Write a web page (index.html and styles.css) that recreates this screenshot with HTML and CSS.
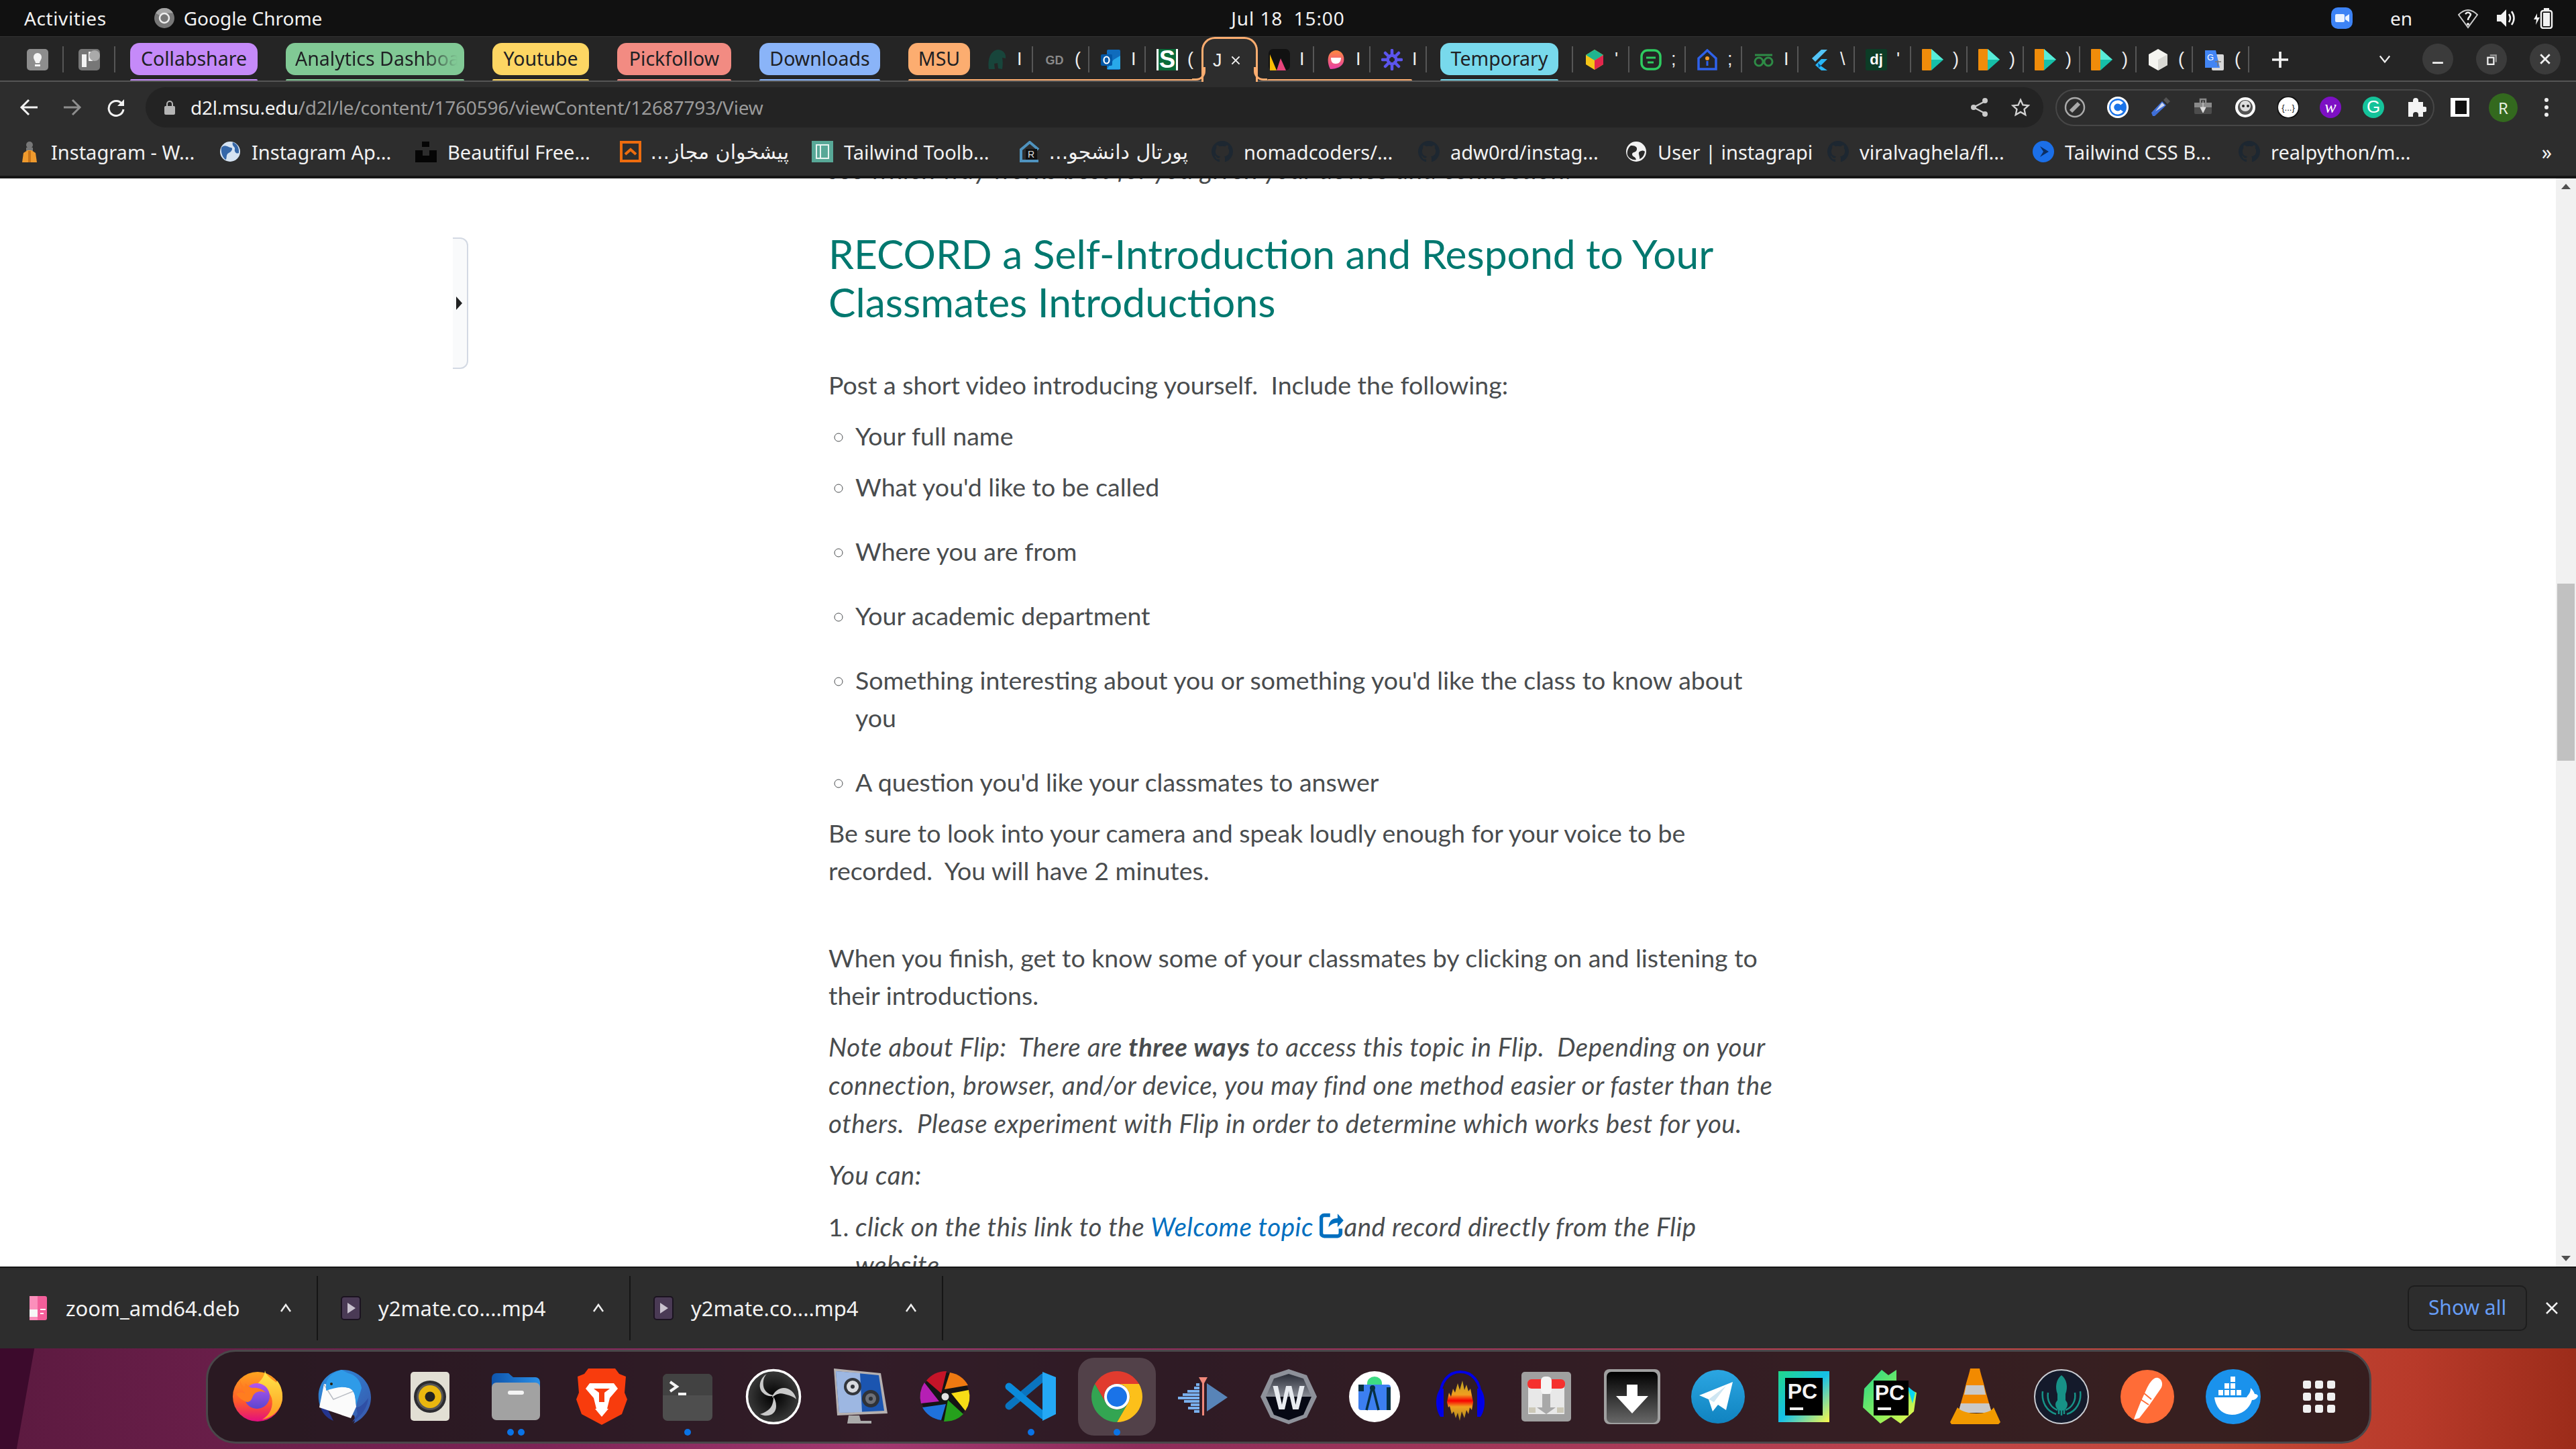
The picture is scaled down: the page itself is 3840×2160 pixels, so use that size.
FILE: index.html
```html
<!DOCTYPE html>
<html lang="en">
<head>
    <meta charset="UTF-8">
    <title>Google Chrome</title>
    <link rel="stylesheet" href="styles.css">
</head>
<body>

    <!-- gnome top bar -->
    <div class="topbar">
        <div class="topbar-left">
            <span class="activities">Activities</span>
            <svg class="app-icon" viewBox="0 0 32 32"><circle cx="16" cy="16" r="15" fill="#777"/><path d="M16 1a15 15 0 0 1 13 7.500H16a7.500 7.500 0 0 0-6.500 3.800L3 8.500A15 15 0 0 1 16 1z" fill="#a5a5a5"/><circle cx="16" cy="16" r="7" fill="none" stroke="#eee" stroke-width="2.500"/></svg>
            <span class="app-name">Google Chrome</span>
        </div>
        <div class="clock">Jul 18&nbsp; 15:00</div>
        <div class="topbar-right">
            <svg class="tray-zoom" viewBox="0 0 32 32"><rect width="32" height="32" rx="10" fill="#3d83f5"/><rect x="6" y="10" width="14" height="12" rx="2" fill="#eaf2ff"/><path d="M21 14l6-4v12l-6-4z" fill="#eaf2ff"/></svg>
            <span class="tray-lang">en</span>
            <svg class="tray-icon" viewBox="0 0 30 32"><path d="M15 30L1 11Q15-3 29 11z" fill="none" stroke="#ccc" stroke-width="2"/><path d="M11 10q4-5 8 0c0 4-4 4-4 9" fill="none" stroke="#eee" stroke-width="2.500"/><circle cx="15" cy="25" r="2" fill="#eee"/></svg>
            <svg class="tray-icon" viewBox="0 0 30 32"><path d="M2 11h6l8-8v26l-8-8H2z" fill="#f2f2f2"/><path d="M20 10q4 6 0 12M24 6q7 10 0 20" fill="none" stroke="#f2f2f2" stroke-width="2.500"/></svg>
            <svg class="tray-icon" viewBox="0 0 30 32"><path d="M6 9L1 18h4l-1 8 6-11H6z" fill="#f2f2f2"/><rect x="12" y="5" width="16" height="26" rx="3" fill="none" stroke="#f2f2f2" stroke-width="2.500"/><rect x="16" y="1" width="8" height="4" fill="#f2f2f2"/><rect x="15" y="8" width="10" height="20" fill="#f2f2f2"/></svg>
        </div>
    </div>

    <!-- tabs -->
    <div class="tabstrip">
        <div class="tab tab--pinned">
            <svg class="fav" viewBox="0 0 32 32"><rect width="32" height="32" rx="5" fill="#8d8d8d"/><path d="M10 12a6 6 0 0 1 12 0c0 4-3 6-3 9h-6c0-3-3-5-3-9z" fill="#f4f4f4"/><rect x="12" y="23" width="8" height="3" fill="#f4f4f4"/></svg>
        </div>
        <div class="tab tab--pinned">
            <svg class="fav" viewBox="0 0 32 32"><rect width="32" height="32" rx="5" fill="#777"/><rect x="5" y="8" width="7" height="19" fill="#f4f4f4"/><rect x="15" y="4" width="6" height="14" fill="#f4f4f4"/><circle cx="24" cy="10" r="8" fill="#aaa"/></svg>
        </div>

        <div class="group group--purple">
            <div class="row"><span class="chip chip--collab">Collabshare</span></div>
            <div class="group-line"></div>
        </div>
        <div class="group group--green">
            <div class="row"><span class="chip chip--analytics"><span class="chip-fade">Analytics Dashboard</span></span></div>
            <div class="group-line"></div>
        </div>
        <div class="group group--yellow">
            <div class="row"><span class="chip chip--youtube">Youtube</span></div>
            <div class="group-line"></div>
        </div>
        <div class="group group--red">
            <div class="row"><span class="chip chip--pick">Pickfollow</span></div>
            <div class="group-line"></div>
        </div>
        <div class="group group--blue">
            <div class="row"><span class="chip chip--downloads">Downloads</span></div>
            <div class="group-line"></div>
        </div>

        <div class="group group--orange group--msu">
            <div class="row">
                <span class="chip chip--msu">MSU</span>
                <div class="tab tab--first">
                    <svg class="fav" viewBox="0 0 32 32"><path d="M4 30C2 16 6 3 17 1c9 0 13 7 12 13l-5-1c1 5 1 11 0 17l-6-1-1-8-5 1 1 8z" fill="#18453b"/></svg>
                    <span class="tab-bit">I</span>
                </div>
                <div class="tab">
                    <svg class="fav" viewBox="0 0 32 32"><text x="16" y="23" class="fav-gd">GD</text></svg>
                    <span class="tab-bit">(</span>
                </div>
                <div class="tab">
                    <svg class="fav" viewBox="0 0 32 32"><rect x="10" y="1" width="20" height="30" rx="2" fill="#0f6cbd"/><path d="M20 16l10-6v20H10z" fill="#28a8ea"/><rect x="1" y="8" width="17" height="17" rx="2" fill="#0358a7"/><ellipse cx="9.500" cy="16.500" rx="4" ry="5" fill="none" stroke="#fff" stroke-width="2.200"/></svg>
                    <span class="tab-bit">I</span>
                </div>
                <div class="tab tab--last">
                    <svg class="fav" viewBox="0 0 32 32"><rect width="32" height="32" fill="#fff"/><rect x="3" width="26" height="32" fill="#0b6b3a"/><text x="16" y="28" class="fav-s">S</text></svg>
                    <span class="tab-bit">(</span>
                </div>
            </div>
            <div class="group-line group-line--msu"></div>
        </div>

        <div class="tab-active">
            <span class="tab-bit tab-bit--active">J</span>
            <svg class="tab-close" viewBox="0 0 20 20"><path d="M3 3l14 14M17 3L3 17" stroke="#f2f2f2" stroke-width="2.500"/></svg>
        </div>

        <div class="group group--orange group--after">
            <div class="row">
                <div class="tab">
                    <svg class="fav" viewBox="0 0 32 32"><rect width="32" height="32" rx="7" fill="#111"/><path d="M2 8l10 24H2z" fill="#fbbc05"/><path d="M18 14l8 18H12z" fill="#e8457c"/></svg>
                    <span class="tab-bit">I</span>
                </div>
                <div class="tab">
                    <svg class="fav" viewBox="0 0 32 32"><defs><linearGradient id="blob" x1="0" y1="0" x2="0" y2="1"><stop offset="0" stop-color="#ff8a3c"/><stop offset="1" stop-color="#e83fa8"/></linearGradient></defs><path d="M16 2c9 0 14 8 12 17-2 7-10 11-20 11-5-9-6-26 8-28z" fill="url(#blob)"/><path d="M9 13h15c0 6-3 9-8 9s-7-3-7-9z" fill="#fff"/></svg>
                    <span class="tab-bit">I</span>
                </div>
                <div class="tab">
                    <svg class="fav" viewBox="0 0 32 32"><g stroke="#5c55ee" stroke-width="4.500" stroke-linecap="round"><path d="M16 2v8M16 22v8M2 16h8M22 16h8M6 6l6 6M20 20l6 6M26 6l-6 6M12 20l-6 6"/></g><circle cx="16" cy="16" r="7" fill="none" stroke="#5c55ee" stroke-width="3"/></svg>
                    <span class="tab-bit">I</span>
                </div>
            </div>
            <div class="group-line group-line--after"></div>
        </div>

        <div class="group group--cyan group--temp">
            <div class="row"><span class="chip chip--temp">Temporary</span></div>
            <div class="group-line"></div>
        </div>

        <div class="sep"></div>
        <div class="tab">
            <svg class="fav" viewBox="0 0 32 32"><path d="M16 1l13 8v14l-13 8-13-8V9z" fill="#f5c518"/><path d="M16 1l13 8-13 8-13-8z" fill="#1fb58f"/><path d="M16 17l13-8v14l-13 8z" fill="#e2264d"/></svg>
            <span class="tab-bit">'</span>
        </div>
        <div class="tab">
            <svg class="fav" viewBox="0 0 32 32"><rect x="2" y="2" width="28" height="28" rx="9" fill="none" stroke="#2ecc60" stroke-width="3.500"/><path d="M9 13h14M11 20h9" stroke="#2ecc60" stroke-width="3"/></svg>
            <span class="tab-bit">;</span>
        </div>
        <div class="tab">
            <svg class="fav" viewBox="0 0 32 32"><path d="M3 14L16 2l13 12v16H3z" fill="none" stroke="#2f62ea" stroke-width="3.500"/><circle cx="16" cy="14" r="3" fill="#f39c2d"/><path d="M16 18v7" stroke="#2f62ea" stroke-width="3"/></svg>
            <span class="tab-bit">;</span>
        </div>
        <div class="tab">
            <svg class="fav" viewBox="0 0 32 32"><g fill="none" stroke="#2e8b46" stroke-width="3"><circle cx="9" cy="19" r="6"/><circle cx="23" cy="19" r="6"/><path d="M3 9h26M15 19h2"/></g></svg>
            <span class="tab-bit">I</span>
        </div>
        <div class="tab">
            <svg class="fav" viewBox="0 0 32 32"><path d="M18 1h9L9 19l-5-5z" fill="#54c5f8"/><path d="M18 15h9L17 25l10 7h-9l-9-8z" fill="#29b6f6"/><path d="M13 21l5 4 -4 3z" fill="#01579b"/></svg>
            <span class="tab-bit">\</span>
        </div>
        <div class="tab">
            <svg class="fav" viewBox="0 0 32 32"><rect width="32" height="32" rx="2" fill="#0c3c26"/><text x="16" y="23" class="fav-dj">dj</text></svg>
            <span class="tab-bit">'</span>
        </div>
        <div class="tab">
            <svg class="fav"><use href="#play"/></svg>
            <span class="tab-bit">)</span>
        </div>
        <div class="tab">
            <svg class="fav"><use href="#play"/></svg>
            <span class="tab-bit">)</span>
        </div>
        <div class="tab">
            <svg class="fav"><use href="#play"/></svg>
            <span class="tab-bit">)</span>
        </div>
        <div class="tab">
            <svg class="fav"><use href="#play"/></svg>
            <span class="tab-bit">)</span>
        </div>
        <div class="tab">
            <svg class="fav" viewBox="0 0 32 32"><path d="M16 0l14 8v16l-14 8-14-8V8z" fill="#f4f4f0"/><path d="M16 16l14-8v16l-14 8z" fill="#d9d9d4"/></svg>
            <span class="tab-bit">(</span>
        </div>
        <div class="tab">
            <svg class="fav" viewBox="0 0 32 32"><rect x="12" y="8" width="18" height="24" rx="2" fill="#d8d8d8"/><path d="M2 2h16l6 26H2z" fill="#4285f4"/><text x="10" y="17" class="fav-g">G</text><path d="M17 19h9M21 17v9" stroke="#777" stroke-width="1.500"/></svg>
            <span class="tab-bit">(</span>
        </div>

        <svg class="tab-plus" viewBox="0 0 26 26"><path d="M13 0v26M0 13h26" stroke="#f2f2f2" stroke-width="4"/></svg>

        <div class="win-controls">
            <svg class="tab-list" viewBox="0 0 20 14"><path d="M2 2l8 10 8-10" fill="none" stroke="#eee" stroke-width="2.500"/></svg>
            <div class="win-btn"><svg viewBox="0 0 16 16"><path d="M1 13h14" stroke="#f2f2f2" stroke-width="2.500"/></svg></div>
            <div class="win-btn"><svg viewBox="0 0 16 16"><rect x="3" y="6" width="8" height="9" fill="none" stroke="#eee" stroke-width="2"/><path d="M6 3h8v9" fill="none" stroke="#999" stroke-width="2"/></svg></div>
            <div class="win-btn"><svg viewBox="0 0 16 16"><path d="M2 2l12 12M14 2L2 14" stroke="#f2f2f2" stroke-width="2.500"/></svg></div>
        </div>
    </div>

    <!-- address bar -->
    <div class="toolbar">
        <svg class="nav-icon" viewBox="0 0 28 28"><path d="M14 3L3 14l11 11M3 14h24" fill="none" stroke="#f2f2f2" stroke-width="3"/></svg>
        <svg class="nav-icon" viewBox="0 0 28 28"><path d="M14 3l11 11-11 11M25 14H1" fill="none" stroke="#8e8e8e" stroke-width="3"/></svg>
        <svg class="nav-icon" viewBox="0 0 28 28"><path d="M23 9a11 11 0 1 0 2 8" fill="none" stroke="#f2f2f2" stroke-width="3"/><path d="M26 2v10H16z" fill="#f2f2f2"/></svg>
        <div class="omnibox">
            <svg class="lock" viewBox="0 0 16 22"><path d="M4 10V6a4 4 0 0 1 8 0v4" fill="none" stroke="#b5b5b5" stroke-width="2"/><rect y="9" width="16" height="13" rx="2" fill="#b5b5b5"/></svg>
            <span class="url"><b>d2l.msu.edu</b>/d2l/le/content/1760596/viewContent/12687793/View</span>
            <svg class="omni-icon" viewBox="0 0 28 30"><g fill="none" stroke="#c9c9c9" stroke-width="2.500"><path d="M22 6L5 15l17 9"/></g><circle cx="22" cy="5" r="4" fill="#c9c9c9"/><circle cx="5" cy="15" r="4" fill="#c9c9c9"/><circle cx="22" cy="25" r="4" fill="#c9c9c9"/></svg>
            <svg class="omni-icon omni-icon--star" viewBox="0 0 30 30"><path d="M15 3l3.700 8.200 8.800.9-6.600 6 1.900 8.800L15 22.400 7.200 27l1.900-8.800-6.600-6 8.800-.9z" fill="none" stroke="#d2d2d2" stroke-width="2.500"/></svg>
        </div>
        <div class="extensions">
            <svg class="ext" viewBox="0 0 32 32"><circle cx="16" cy="16" r="14" fill="none" stroke="#aaa" stroke-width="2.500"/><path d="M10 22L22 10" stroke="#aaa" stroke-width="6"/></svg>
            <svg class="ext" viewBox="0 0 32 32"><circle cx="16" cy="16" r="16" fill="#fff"/><circle cx="16" cy="16" r="13" fill="#1a73e8"/><path d="M22 11a8 8 0 1 0 0 10" fill="none" stroke="#fff" stroke-width="5"/></svg>
            <svg class="ext" viewBox="0 0 32 32"><path d="M5 29L3 24 19 7l6 6L8 29z" fill="#3f6fd8"/><path d="M9 22L19 9l4 4" fill="#cfd8ef"/><path d="M21 5l4-4 6 6-4 4z" fill="#555"/></svg>
            <svg class="ext" viewBox="0 0 32 32"><rect x="3" y="9" width="26" height="17" rx="2" fill="#4d4d4d"/><rect x="3" y="9" width="26" height="7" fill="#8a8a8a"/><path d="M12 9V4h8v5" fill="none" stroke="#8a8a8a" stroke-width="2.500"/><path d="M16 6v14M12 16h8l-4 8z" fill="#ddd" stroke="#ddd" stroke-width="1"/></svg>
            <svg class="ext" viewBox="0 0 32 32"><circle cx="16" cy="16" r="15" fill="#fff"/><circle cx="16" cy="16" r="11" fill="#555"/><circle cx="16" cy="14" r="8" fill="#ddd"/><circle cx="13" cy="14" r="2" fill="#222"/><circle cx="20" cy="14" r="2" fill="#222"/></svg>
            <svg class="ext" viewBox="0 0 32 32"><circle cx="16" cy="16" r="16" fill="#fff"/><circle cx="16" cy="16" r="16" fill="none" stroke="#111" stroke-width="2"/><text x="16" y="21" class="ext-dots">{...}</text></svg>
            <svg class="ext" viewBox="0 0 32 32"><circle cx="16" cy="16" r="16" fill="#7d10c4"/><text x="16" y="24" class="ext-w">w</text></svg>
            <svg class="ext" viewBox="0 0 32 32"><circle cx="16" cy="16" r="16" fill="#15c39a"/><text x="16" y="24" class="ext-g">G</text></svg>
            <svg class="ext" viewBox="0 0 32 32"><path d="M5 8h7V6a4 4 0 0 1 8 0v2h7v7h2a4 4 0 0 1 0 8h-2v7H20v-3a4 4 0 0 0-8 0v3H5z" fill="#f4f4f4"/></svg>
        </div>
        <div class="side-panel"></div>
        <div class="avatar">R</div>
        <svg class="kebab" viewBox="0 0 8 32"><circle cx="4" cy="5" r="3" fill="#eee"/><circle cx="4" cy="16" r="3" fill="#eee"/><circle cx="4" cy="27" r="3" fill="#eee"/></svg>
    </div>

    <!-- bookmarks -->
    <div class="bookmarks">
        <div class="bm">
            <svg class="fav" viewBox="0 0 32 32"><circle cx="16" cy="6" r="5" fill="#777"/><rect x="11" y="10" width="10" height="5" fill="#777"/><path d="M5 32l2-14 6-4h6l6 4 2 14z" fill="#ef9a2d"/><path d="M14 15h4v17h-4z" fill="#c9751a"/></svg>
            <span>Instagram - W...</span>
        </div>
        <div class="bm">
            <svg class="fav" viewBox="0 0 32 32"><circle cx="16" cy="16" r="15" fill="#d5e3f2"/><path d="M3 10c6-6 10 0 14 0s2 6-3 8-2 10-5 10C4 24 2 16 3 10zM20 2c6 2 10 8 9 16-4 2-7-2-6-6 1-3-5-4-3-10z" fill="#3567a8"/></svg>
            <span>Instagram Ap...</span>
        </div>
        <div class="bm">
            <svg class="fav" viewBox="0 0 32 32"><rect x="10" y="1" width="11" height="8" fill="#050505"/><path d="M0 14h11v8h10v-8h11v18H0z" fill="#050505"/></svg>
            <span>Beautiful Free...</span>
        </div>
        <div class="bm">
            <svg class="fav" viewBox="0 0 32 32"><rect x="2" y="2" width="28" height="28" fill="none" stroke="#ee6c0e" stroke-width="4"/><path d="M8 20l8-7 8 7" fill="none" stroke="#ee6c0e" stroke-width="4"/></svg>
            <span class="bm-rtl" dir="rtl">پیشخوان مجاز...</span>
        </div>
        <div class="bm">
            <svg class="fav" viewBox="0 0 32 32"><rect width="32" height="32" fill="#58a897"/><rect x="7" y="6" width="18" height="20" fill="none" stroke="#e8f3f0" stroke-width="2"/><path d="M13 6v20" stroke="#e8f3f0" stroke-width="2"/></svg>
            <span>Tailwind Toolb...</span>
        </div>
        <div class="bm">
            <svg class="fav" viewBox="0 0 32 32"><path d="M3 32V13L16 2l13 11" fill="none" stroke="#4f93bf" stroke-width="4"/><path d="M3 30h26" stroke="#4f93bf" stroke-width="4"/><rect x="10" y="12" width="17" height="16" fill="#111"/><text x="18" y="25" class="fav-r">R</text></svg>
            <span class="bm-rtl" dir="rtl">پورتال دانشجو...</span>
        </div>
        <div class="bm">
            <svg class="fav"><use href="#gh"/></svg>
            <span>nomadcoders/...</span>
        </div>
        <div class="bm">
            <svg class="fav"><use href="#gh"/></svg>
            <span>adw0rd/instag...</span>
        </div>
        <div class="bm">
            <svg class="fav" viewBox="0 0 32 32"><circle cx="16" cy="16" r="15" fill="#f2f2f2"/><path d="M8 7c5 0 10 1 9 6s-7 3-7 7 5 3 6 8c-5 1-11-2-13-7-1-5 1-11 5-14zM21 16c3-2 6-2 8 0-1 5-3 9-8 11 1-4-3-9 0-11z" fill="#2a2a2a"/></svg>
            <span>User | instagrapi</span>
        </div>
        <div class="bm">
            <svg class="fav"><use href="#gh"/></svg>
            <span>viralvaghela/fl...</span>
        </div>
        <div class="bm">
            <svg class="fav" viewBox="0 0 32 32"><circle cx="16" cy="16" r="16" fill="#1b6fe8"/><path d="M11 8l13 8-13 8 5-8z" fill="#0b2e63"/></svg>
            <span>Tailwind CSS B...</span>
        </div>
        <div class="bm">
            <svg class="fav"><use href="#gh"/></svg>
            <span>realpython/m...</span>
        </div>
        <span class="bm-more">»</span>
    </div>

    <!-- page -->
    <div class="content">
        <div class="handle"><div class="handle-arrow"></div></div>
        <div class="article">
            <p class="clipped"><em>see which way works best for you given your device and connection.</em></p>
            <h2>RECORD a Self-Introduction and Respond to Your Classmates Introductions</h2>
            <p>Post a short video introducing yourself.&nbsp; Include the following:</p>
            <ul>
                <li>Your full name</li>
                <li>What you'd like to be called</li>
                <li class="spaced">Where you are from</li>
                <li class="spaced">Your academic department</li>
                <li class="spaced">Something interesting about you or something you'd like the class to know about you</li>
                <li class="spaced">A question you'd like your classmates to answer</li>
            </ul>
            <p>Be sure to look into your camera and speak loudly enough for your voice to be recorded.&nbsp; You will have 2 minutes.</p>
            <p class="blank">&nbsp;</p>
            <p>When you finish, get to know some of your classmates by clicking on and listening to their introductions.</p>
            <p><em>Note about Flip:&nbsp; There are <strong>three ways</strong> to access this topic in Flip.&nbsp; Depending on your connection, browser, and/or device, you may find one method easier or faster than the others.&nbsp; Please experiment with Flip in order to determine which works best for you.</em></p>
            <p><em>You can:</em></p>
            <ol>
                <li><em>click on the this link to the <a href="#">Welcome topic</a> <svg class="ext-link" viewBox="0 0 32 36"><path d="M14 5H6a4 4 0 0 0-4 4v20a4 4 0 0 0 4 4h18a4 4 0 0 0 4-4v-6" fill="none" stroke="#006fbf" stroke-width="5"/><path d="M12 21c0-8 5-12 12-12V3l8 9-8 9v-6c-5 0-9 2-12 6z" fill="#006fbf"/></svg>and record directly from the Flip website</em></li>
            </ol>
        </div>
        <div class="scrollbar">
            <div class="scroll-up"></div>
            <div class="scroll-thumb"></div>
            <div class="scroll-down"></div>
        </div>
    </div>

    <!-- downloads -->
    <div class="shelf">
        <div class="dl">
            <svg class="dl-icon" viewBox="0 0 30 36"><rect x="2" width="26" height="36" rx="3" fill="#f25e9a"/><rect x="2" width="12" height="36" fill="#fb8fbb"/><rect x="2" y="20" width="12" height="11" fill="#f6f6f6"/><path d="M18 20h8M18 26h5" stroke="#fff" stroke-width="2"/></svg>
            <span class="dl-name">zoom_amd64.deb</span>
            <svg class="dl-caret" viewBox="0 0 18 14"><path d="M2 12L9 2l7 10" fill="none" stroke="#eee" stroke-width="2.500"/></svg>
        </div>
        <div class="dl">
            <svg class="dl-icon" viewBox="0 0 30 36"><use href="#video"/></svg>
            <span class="dl-name">y2mate.co....mp4</span>
            <svg class="dl-caret" viewBox="0 0 18 14"><path d="M2 12L9 2l7 10" fill="none" stroke="#eee" stroke-width="2.500"/></svg>
        </div>
        <div class="dl">
            <svg class="dl-icon" viewBox="0 0 30 36"><use href="#video"/></svg>
            <span class="dl-name">y2mate.co....mp4</span>
            <svg class="dl-caret" viewBox="0 0 18 14"><path d="M2 12L9 2l7 10" fill="none" stroke="#eee" stroke-width="2.500"/></svg>
        </div>
        <div class="show-all">Show all</div>
        <svg class="shelf-close" viewBox="0 0 20 20"><path d="M2 2l16 16M18 2L2 18" stroke="#f2f2f2" stroke-width="2.500"/></svg>
    </div>

    <!-- desktop + dock -->
    <div class="desktop">
        <div class="dock">
            <!-- firefox -->
            <div class="dock-item">
                <svg viewBox="0 0 84 84"><defs><linearGradient id="ffA" x1="0" y1="0" x2="0" y2="1"><stop offset="0" stop-color="#ffa51f"/><stop offset=".6" stop-color="#ff5a2a"/><stop offset="1" stop-color="#e30d7f"/></linearGradient><linearGradient id="ffB" x1="0" y1="0" x2="0" y2="1"><stop offset="0" stop-color="#b455f0"/><stop offset="1" stop-color="#5b46cf"/></linearGradient><linearGradient id="ffC" x1="0" y1="0" x2="0" y2="1"><stop offset="0" stop-color="#ffe74a"/><stop offset="1" stop-color="#ff9a1f"/></linearGradient></defs><circle cx="41" cy="42" r="37" fill="url(#ffA)"/><path d="M52 3c1 7 9 12 17 18l1-3c5 6 9 16 8 28-2 14-13 27-30 30 12-7 17-20 14-32-3-10-12-17-24-17 5-8 13-12 14-24z" fill="url(#ffC)"/><circle cx="40" cy="41" r="19" fill="url(#ffB)"/><path d="M15 17c1 5 3 9 7 11l1-6c3 3 6 6 10 7 7-1 15 1 20 7-9-4-16-1-19 5-2 5-3 8-8 9-6-1-13-6-17-12 5-3 8-3 13-1-5-6-8-12-7-20z" fill="#ff7d1f"/></svg>
            </div>
            <!-- thunderbird -->
            <div class="dock-item">
                <svg viewBox="0 0 84 84"><defs><linearGradient id="tbA" x1="0" y1="0" x2="1" y2="1"><stop offset="0" stop-color="#2b8fe0"/><stop offset="1" stop-color="#3a55a8"/></linearGradient></defs><path d="M38 2c24-1 44 18 44 41 0 18-11 32-26 39 3-4 2-8 1-12L6 56C-2 30 12 6 38 2z" fill="url(#tbA)"/><path d="M6 54c2 12 10 20 20 24L14 54z" fill="#24358f"/><path d="M5 58l7-35 45 7 3 27-8 17z" fill="#fbfbfb"/><path d="M12 24l14 22 32-13" fill="none" stroke="#b9bdc4" stroke-width="1.500"/><path d="M15 24c1-10 9-18 23-22l10 5c10 2 18 10 20 22-2 8-5 14-8 26-1-14-3-23-11-26-10-3-22 0-34 4z" fill="#2f9be8"/><circle cx="23" cy="23" r="2" fill="#2b2008"/><path d="M60 58c6 0 12-6 18-14-1 12-8 26-24 36l8-12z" fill="#2f4fa5"/></svg>
            </div>
            <!-- rhythmbox -->
            <div class="dock-item">
                <svg viewBox="0 0 84 84"><rect x="13" y="5" width="58" height="73" rx="5" fill="#e2dfd4"/><circle cx="42" cy="42" r="24" fill="#2c2c30"/><circle cx="42" cy="42" r="20" fill="#565658"/><circle cx="42" cy="42" r="17" fill="#e9b70f"/><circle cx="42" cy="42" r="7.500" fill="#222"/></svg>
            </div>
            <!-- files -->
            <div class="dock-item">
                <svg viewBox="0 0 84 84"><defs><linearGradient id="flA" x1="0" y1="0" x2="1" y2="0"><stop offset="0" stop-color="#0e55ad"/><stop offset="1" stop-color="#2b8fe6"/></linearGradient></defs><path d="M6 14a7 7 0 0 1 7-7h18l7 6h33a7 7 0 0 1 7 7v14H6z" fill="url(#flA)"/><rect x="6" y="21" width="72" height="56" rx="7" fill="#a2a2a2"/><rect x="30" y="33" width="24" height="6" rx="3" fill="#f4f4f4"/></svg>
                <div class="dock-dots"><i></i><i></i></div>
            </div>
            <!-- brave -->
            <div class="dock-item">
                <svg viewBox="0 0 84 84"><path d="M22 0h40l6 8 10 4-2 24 4 10-8 22-30 16-30-16-8-22 4-10-2-24 10-4z" fill="#f83c0d"/><path d="M24 22h36l6 8-12 14-4 16-8 8-8-8-4-16-12-14z" fill="#fff"/><path d="M30 30h24l-8 6v14h-8V36z" fill="#f83c0d"/><path d="M32 60h20l-10 12z" fill="#fff"/></svg>
            </div>
            <!-- terminal -->
            <div class="dock-item">
                <svg viewBox="0 0 84 84"><rect x="5" y="8" width="74" height="70" rx="7" fill="#4e4e4e"/><path d="M5 15a7 7 0 0 1 7-7h60a7 7 0 0 1 7 7v25H5z" fill="#424242"/><path d="M16 20l10 7-10 7" fill="none" stroke="#f4f4f4" stroke-width="4"/><path d="M28 38h12" stroke="#f4f4f4" stroke-width="4"/></svg>
                <div class="dock-dots"><i></i></div>
            </div>
            <!-- obs -->
            <div class="dock-item">
                <svg viewBox="0 0 84 84"><defs><radialGradient id="obsA"><stop offset="0" stop-color="#000"/><stop offset="1" stop-color="#3a3a3a"/></radialGradient></defs><circle cx="42" cy="42" r="39.500" fill="url(#obsA)" stroke="#fff" stroke-width="3.500"/><g fill="#c9c9c9"><path d="M32 8C22 14 18 28 26 36c6 6 14 6 18 4-8 0-16-6-17-14-1-8 1-14 5-18z"/><path d="M76 46C74 34 62 26 52 30c-8 3-12 10-12 14 4-6 12-8 18-6 8 2 14 4 18 8z"/><path d="M22 68c12 6 24 0 24-12 0-6-2-10-4-14 0 8-2 16-8 20-4 3-8 5-12 6z"/></g></svg>
            </div>
            <!-- video converter -->
            <div class="dock-item">
                <svg viewBox="0 0 84 84"><path d="M4 0l70 7 10 60-75 3z" fill="#b5b0b0"/><path d="M7 4l64 6 8 53-67 3z" fill="#1b55b0"/><path d="M7 4l36 3 3 58-34 1z" fill="#9db7e2"/><circle cx="32" cy="27" r="13" fill="#33363c"/><circle cx="32" cy="27" r="9" fill="#d8dadf"/><circle cx="32" cy="27" r="3" fill="#33363c"/><circle cx="59" cy="45" r="13" fill="#2f3238"/><circle cx="59" cy="45" r="8" fill="#6d7078"/><circle cx="59" cy="45" r="3" fill="#2f3238"/><path d="M26 70h16l2 8h16v4H24z" fill="#aaa"/></svg>
            </div>
            <!-- darktable -->
            <div class="dock-item">
                <svg viewBox="0 0 84 84"><circle cx="42" cy="42" r="36" fill="#141414"/><path d="M14 18A38 38 0 0 1 44 4L36 37z" fill="#c41428"/><path d="M49 6A38 38 0 0 1 76 25L41 31z" fill="#ef7a11"/><path d="M77 32A38 38 0 0 1 72 63L51 37z" fill="#f7dd16"/><path d="M69 68A38 38 0 0 1 40 79L46 47z" fill="#25a01c"/><path d="M36 77A38 38 0 0 1 8 58L43 53z" fill="#1f72dc"/><path d="M6 52A38 38 0 0 1 11 21L33 49z" fill="#b61fb4"/><circle cx="42" cy="42" r="5.500" fill="#e2e2e2"/></svg>
            </div>
            <!-- vs code -->
            <div class="dock-item">
                <svg viewBox="0 0 84 84"><path d="M9 56L60 13" fill="none" stroke="#0a74bf" stroke-width="11" stroke-linecap="round"/><path d="M9 27L60 70" fill="none" stroke="#0a8ada" stroke-width="11" stroke-linecap="round"/><path d="M59 5l20 8v55l-20 10z" fill="#24a8f5"/></svg>
                <div class="dock-dots"><i></i></div>
            </div>
            <!-- chrome -->
            <div class="dock-item dock-item--active">
                <svg viewBox="0 0 84 84"><path d="M9.100 23A38 38 0 0 1 74.900 23L42 23A19 19 0 0 0 25.500 51.500Z" fill="#e13b2e"/><path d="M74.900 23A38 38 0 0 1 42 80L58.500 51.500A19 19 0 0 0 42 23Z" fill="#fcc01a"/><path d="M42 80A38 38 0 0 1 9.100 23L25.500 51.500A19 19 0 0 0 58.500 51.500Z" fill="#33a552"/><circle cx="42" cy="42" r="19" fill="#fff"/><circle cx="42" cy="42" r="15" fill="#1a73e8"/></svg>
                <div class="dock-dots"><i></i></div>
            </div>
            <!-- kdenlive -->
            <div class="dock-item">
                <svg viewBox="0 0 84 84"><path d="M48 22l31 21-31 21z" fill="#5884b8"/><path d="M36 13h13l-5 9v48h-3V22z" fill="#f0887a"/><path d="M32 22h5v4h-5zM29 27h8v4h-8zM19 32h18v4H19zM12 37h25v4H12zM5 42h32v4H5zM14 47h23v4H14zM24 52h13v4H24zM20 57h17v4H20zM29 62h8v4h-8z" fill="#79b0ee"/></svg>
            </div>
            <!-- warp -->
            <div class="dock-item">
                <svg viewBox="0 0 84 84"><defs><linearGradient id="wpA" x1="0" y1="0" x2="0" y2="1"><stop offset="0" stop-color="#2a2d38"/><stop offset=".5" stop-color="#8a8d96"/><stop offset=".5" stop-color="#060814"/><stop offset="1" stop-color="#060814"/></linearGradient></defs><path d="M42 1l27 9 15 32-15 31-27 10-27-10L0 42 15 10z" fill="#8e919a"/><path d="M42 8l22 7 12 27-12 27-22 8-22-8L8 42l12-27z" fill="url(#wpA)"/><text x="42" y="61" class="dock-w">W</text></svg>
            </div>
            <!-- android studio -->
            <div class="dock-item">
                <svg viewBox="0 0 84 84"><circle cx="42" cy="42" r="38" fill="#fff"/><path d="M31 22a11 10 0 0 1 22 0v2H31z" fill="#3ddc84"/><rect x="18" y="24" width="48" height="38" rx="4" fill="#3c7ff0"/><rect x="18" y="24" width="8" height="10" fill="#073042"/><path d="M30 62l9-36 9 36" fill="none" stroke="#073042" stroke-width="3.500"/><circle cx="39" cy="29" r="3" fill="none" stroke="#073042" stroke-width="2"/><rect x="60" y="28" width="6" height="34" fill="#073042"/></svg>
            </div>
            <!-- audacity -->
            <div class="dock-item">
                <svg viewBox="0 0 84 84"><defs><linearGradient id="aud" x1="0" y1="0" x2="0" y2="1"><stop offset="0" stop-color="#b9a020"/><stop offset=".35" stop-color="#f0a020"/><stop offset=".5" stop-color="#f80000"/><stop offset=".65" stop-color="#f0a020"/><stop offset="1" stop-color="#a08a20"/></linearGradient></defs><path d="M12 42C12 20 24 5 42 5s30 15 30 37" fill="none" stroke="#0000e6" stroke-width="4"/><path d="M12 30C4 40 4 60 12 72h5V30z" fill="#0000e6"/><path d="M72 30c8 10 8 30 0 42h-5V30z" fill="#0000e6"/><path d="M22 50l3-14 3 6 3-12 3 6 4-14 3 10 4-14 3 14 3-8 3 10 3-4 2 10 2 10-2 12-3-4-2 10-3-6-3 12-4-10-3 14-3-12-3 8-3-10-3 4-3-12-2 2z" fill="url(#aud)"/></svg>
            </div>
            <!-- install toggle -->
            <div class="dock-item">
                <svg viewBox="0 0 84 84"><rect x="5" y="5" width="74" height="74" rx="5" fill="#a0a0a0"/><rect x="15" y="18" width="54" height="50" fill="#e8e8e8"/><rect x="14" y="16" width="56" height="14" rx="6" fill="#f5302e"/><rect x="34" y="12" width="16" height="26" rx="6" fill="#f4f4f4"/><path d="M36 38h12v20h8L42 68 28 58h8z" fill="#a8a8a8"/><rect x="16" y="58" width="10" height="8" fill="#ccc8b8"/><rect x="58" y="58" width="10" height="8" fill="#ccc8b8"/></svg>
            </div>
            <!-- down arrow -->
            <div class="dock-item">
                <svg viewBox="0 0 84 84"><defs><linearGradient id="dlb" x1="0" y1="0" x2="0" y2="1"><stop offset="0" stop-color="#000"/><stop offset="1" stop-color="#676767"/></linearGradient></defs><rect x="0" y="1" width="84" height="82" rx="8" fill="#a0a0a0"/><rect x="4" y="5" width="76" height="76" rx="7" fill="url(#dlb)"/><path d="M34 24h16v17h16L42 67 18 41h16z" fill="#fff"/></svg>
            </div>
            <!-- telegram -->
            <div class="dock-item">
                <svg viewBox="0 0 84 84"><defs><linearGradient id="tg" x1="0" y1="0" x2="0" y2="1"><stop offset="0" stop-color="#2ba6e2"/><stop offset="1" stop-color="#1083c0"/></linearGradient></defs><circle cx="42" cy="42" r="40" fill="url(#tg)"/><path d="M64 20L14 40l14 6 6 18 8-10 12 8z" fill="#fff"/><path d="M28 46l26-20-18 24z" fill="#cfe6f2"/></svg>
            </div>
            <!-- pycharm -->
            <div class="dock-item">
                <svg viewBox="0 0 84 84"><defs><linearGradient id="pc1" x1="0" y1="0" x2="1" y2="1"><stop offset="0" stop-color="#21d789"/><stop offset=".5" stop-color="#14c0e8"/><stop offset="1" stop-color="#fcf84a"/></linearGradient></defs><rect x="4" y="4" width="76" height="76" fill="url(#pc1)"/><rect x="14" y="14" width="56" height="56" fill="#000"/><text x="40" y="45" class="dock-pc">PC</text><rect x="21" y="58" width="20" height="4" fill="#f2f2f2"/></svg>
            </div>
            <div class="dock-item">
                <svg viewBox="0 0 84 84"><defs><linearGradient id="pc2" x1="0" y1="0" x2="1" y2="1"><stop offset="0" stop-color="#21d789"/><stop offset=".6" stop-color="#8ef05a"/><stop offset="1" stop-color="#fcf84a"/></linearGradient></defs><path d="M4 30L30 2l10 8 12-8v20l30 14-4 28-20 18-14-10-16 10L2 58z" fill="url(#pc2)"/><path d="M68 26l12 10-4 16z" fill="#0ad7f2"/><rect x="18" y="18" width="52" height="52" fill="#000"/><text x="42" y="47" class="dock-pc">PC</text><rect x="24" y="58" width="20" height="4" fill="#f2f2f2"/></svg>
            </div>
            <!-- vlc -->
            <div class="dock-item">
                <svg viewBox="0 0 84 84"><path d="M34 0h14c2 10 6 20 9 34l9 32H16l9-32C28 20 32 10 34 0z" fill="#f28a00"/><path d="M28 25h26l3 14H25z" fill="#c9c9c9"/><path d="M20 52h42l4 14H16z" fill="#c9c9c9"/><path d="M15 58L4 80l2 3h70l3-3-10-22c-6 12-44 12-54 0z" fill="#f29a00"/></svg>
            </div>
            <!-- gitkraken -->
            <div class="dock-item">
                <svg viewBox="0 0 84 84"><circle cx="42" cy="42" r="40" fill="#141a2b" stroke="#c9ccd2" stroke-width="2"/><path d="M42 10c8 6 10 18 6 28v10h-12V38c-4-10-2-22 6-28z" fill="#179287"/><g fill="none" stroke="#179287" stroke-width="2.500"><path d="M14 34c-2 16 6 30 20 34M70 34c2 16-6 30-20 34"/><path d="M22 36c-2 12 4 22 14 26M62 36c2 12-4 22-14 26"/><path d="M38 48v20M46 48v20M42 48v22"/></g><circle cx="42" cy="54" r="9" fill="#179287"/></svg>
            </div>
            <!-- postman -->
            <div class="dock-item">
                <svg viewBox="0 0 84 84"><circle cx="42" cy="42" r="40" fill="#ff6c37"/><path d="M58 14c6 2 8 10 4 16L44 56 30 74l-8 2 2-6 8-20 10-22c4-8 10-16 16-14z" fill="#fff"/><path d="M36 36l12 10M32 46l12 8" stroke="#ff6c37" stroke-width="2"/></svg>
            </div>
            <!-- docker -->
            <div class="dock-item">
                <svg viewBox="0 0 84 84"><circle cx="42" cy="42" r="41" fill="#1a92ec"/><path d="M14 43h48c2-4 6-6 6-14 3 3 5 6 6 9 3 0 4 1 5 3-2 4-5 6-9 6-4 14-16 22-30 22-14 0-24-10-26-26z" fill="#fff"/><path d="M20 32h7v8h-7zM29 32h7v8h-7zM38 32h7v8h-7zM47 32h7v8h-7zM29 22h7v8h-7zM38 22h7v8h-7zM38 12h7v8h-7z" fill="#fff"/></svg>
            </div>
            <!-- app grid -->
            <div class="dock-item">
                <svg viewBox="0 0 84 84"><g fill="#f0f0f0"><rect x="18" y="18" width="12" height="12" rx="3"/><rect x="36" y="18" width="12" height="12" rx="3"/><rect x="54" y="18" width="12" height="12" rx="3"/><rect x="18" y="36" width="12" height="12" rx="3"/><rect x="36" y="36" width="12" height="12" rx="3"/><rect x="54" y="36" width="12" height="12" rx="3"/><rect x="18" y="54" width="12" height="12" rx="3"/><rect x="36" y="54" width="12" height="12" rx="3"/><rect x="54" y="54" width="12" height="12" rx="3"/></g></svg>
            </div>
        </div>
    </div>

    <!-- shared icons -->
    <svg class="defs">
        <symbol id="play" viewBox="0 0 32 32"><rect width="14" height="32" rx="1" fill="#f08c0a"/><path d="M14 0l18 16-18 16z" fill="#16bfa8"/><path d="M14 0l18 16H14z" fill="#58ecd8"/></symbol>
        <symbol id="gh" viewBox="0 0 16 16"><path d="M8 0C3.580 0 0 3.580 0 8c0 3.540 2.290 6.530 5.470 7.590.4.070.55-.17.55-.38 0-.19-.01-.82-.01-1.490-2.010.37-2.530-.49-2.690-.94-.09-.23-.48-.94-.82-1.130-.28-.15-.68-.52-.01-.53.63-.01 1.080.58 1.230.82.72 1.210 1.870.87 2.330.66.07-.52.28-.87.51-1.070-1.780-.2-3.640-.89-3.640-3.950 0-.87.31-1.590.82-2.150-.08-.2-.36-1.020.08-2.120 0 0 .67-.21 2.200.82.64-.18 1.320-.27 2-.27.68 0 1.360.09 2 .27 1.530-1.040 2.200-.82 2.200-.82.44 1.100.16 1.920.08 2.120.51.56.82 1.270.82 2.150 0 3.070-1.870 3.750-3.650 3.950.29.25.54.73.54 1.480 0 1.070-.01 1.930-.01 2.200 0 .21.15.46.55.38A8.013 8.013 0 0016 8c0-4.420-3.580-8-8-8z" fill="#1d2731"/></symbol>
        <symbol id="video" viewBox="0 0 30 36"><rect width="30" height="36" rx="5" fill="#1b1320"/><rect x="2" y="2" width="26" height="32" rx="3" fill="#4a3a55"/><path d="M10 10l12 8-12 8z" fill="#c9c2ce"/></symbol>
    </svg>

</body>
</html>
```
FILE: styles.css
```css
* {
    box-sizing: border-box;
}

html, body {
    margin: 0;
    padding: 0;
}

body {
    width: 3840px;
    height: 2160px;
    display: flex;
    flex-direction: column;
    overflow: hidden;
    background: #2d2d2d;
    font-family: "Noto Sans", "DejaVu Sans", sans-serif;
    color: #f2f2f2;
}

svg {
    display: block;
    flex-shrink: 0;
}

.defs {
    width: 0;
    height: 0;
    position: absolute;
}

/* top bar */
.topbar {
    height: 54px;
    flex-shrink: 0;
    background: #111;
    display: grid;
    grid-template-columns: 1fr auto 1fr;
    align-items: center;
    font-size: 28px;
}

.topbar-left {
    display: flex;
    align-items: center;
    padding-left: 36px;
}

.activities {
    letter-spacing: 0.6px;
}

.app-icon {
    width: 32px;
    height: 32px;
    margin-left: 70px;
}

.app-name {
    margin-left: 13px;
}

.clock {
    letter-spacing: 0.9px;
}

.topbar-right {
    display: flex;
    align-items: center;
    justify-content: flex-end;
    padding-right: 34px;
}

.tray-zoom {
    width: 32px;
    height: 32px;
}

.tray-lang {
    margin-left: 56px;
    margin-right: 68px;
}

.tray-icon {
    width: 30px;
    height: 32px;
    margin-right: 26px;
}

.tray-icon:last-child {
    margin-right: 0;
}

/* tab strip */
.tabstrip {
    height: 68px;
    flex-shrink: 0;
    background: #252525;
    border-bottom: 2px solid #555;
    border-top: 1px solid #333;
    display: flex;
    align-items: flex-start;
    padding-left: 18px;
    padding-right: 23px;
}

.tab {
    width: 84px;
    height: 39px;
    margin-top: 14px;
    display: flex;
    align-items: center;
    padding-left: 16px;
    border-right: 2px solid #565656;
    flex-shrink: 0;
}

.tab--pinned {
    width: 77px;
    padding-left: 22px;
}

.tab--first {
    margin-left: 10px;
    padding-left: 14px;
}

.tab--last {
    border-right: none;
    width: 83px;
}

.fav {
    width: 32px;
    height: 32px;
}

.tab-bit {
    margin-left: 14px;
    font-family: "Liberation Sans", sans-serif;
    font-size: 27px;
    line-height: 1;
    color: #eee;
}

.group {
    display: flex;
    flex-direction: column;
    flex-shrink: 0;
    height: 65px;
}

.row {
    display: flex;
    align-items: flex-start;
    height: 63px;
}

.group-line {
    height: 2px;
    border-radius: 2px 2px 0 0;
}

.chip {
    display: block;
    height: 48px;
    margin-top: 9px;
    border-radius: 14px;
    color: #202124;
    font-size: 28.5px;
    line-height: 47px;
    text-align: center;
    overflow: hidden;
    white-space: nowrap;
}

.group--purple { margin-left: 22px; }
.group--purple .chip, .group--purple .group-line { background: #c58af9; }
.group--green .chip, .group--green .group-line { background: #81c995; }
.group--yellow .chip, .group--yellow .group-line { background: #fdd663; }
.group--red .chip, .group--red .group-line { background: #f28b82; }
.group--blue .chip, .group--blue .group-line { background: #8ab4f8; }
.group--orange .chip, .group--orange .group-line { background: #fcad70; }
.group--cyan .chip, .group--cyan .group-line { background: #78d9ec; }

.group--green, .group--yellow, .group--red, .group--blue, .group--msu {
    margin-left: 42px;
}

.chip--collab { width: 190px; }
.chip--analytics { width: 266px; padding-left: 14px; text-align: left; }
.chip--youtube { width: 144px; }
.chip--pick { width: 170px; }
.chip--downloads { width: 180px; }
.chip--msu { width: 92px; }
.chip--temp { width: 176px; }

.chip-fade {
    display: block;
    -webkit-mask-image: linear-gradient(90deg, #000 76%, transparent 96%);
    mask-image: linear-gradient(90deg, #000 76%, transparent 96%);
}

.group--temp {
    margin-left: 20px;
}

.group-line--msu {
    margin-right: 14px;
    border-radius: 2px 0 0 0;
}

.group-line--after {
    margin-left: 14px;
    margin-right: 22px;
}

.tab-active {
    width: 84px;
    height: 67px;
    margin-bottom: -2px;
    flex-shrink: 0;
    background: #2d2d2d;
    border: 3px solid #fcad70;
    border-bottom: none;
    border-radius: 20px 20px 0 0;
    display: flex;
    align-items: center;
    padding-left: 14px;
    position: relative;
    z-index: 1;
}

/* curved feet where the tab meets the group line */
.tab-active::before, .tab-active::after {
    content: "";
    position: absolute;
    bottom: 2px;
    width: 17px;
    height: 17px;
    border-bottom: 3px solid #fcad70;
}

.tab-active::before {
    left: -17px;
    border-right: 3px solid #fcad70;
    border-radius: 0 0 14px 0;
}

.tab-active::after {
    right: -17px;
    border-left: 3px solid #fcad70;
    border-radius: 0 0 0 14px;
}

.tab-bit--active {
    margin-left: 0;
    width: 26px;
}

.tab-close {
    width: 16px;
    height: 16px;
}

.group--after {
    margin-left: 0;
}

.sep {
    width: 2px;
    height: 39px;
    margin-top: 14px;
    margin-left: 20px;
    background: #565656;
    flex-shrink: 0;
}

.tab-plus {
    width: 24px;
    height: 24px;
    margin-left: 34px;
    margin-top: 22px;
}

.win-controls {
    display: flex;
    align-items: center;
    margin-left: auto;
    margin-top: 10px;
}

.tab-list {
    width: 18px;
    height: 14px;
    margin-right: 47px;
}

.win-btn {
    width: 46px;
    height: 46px;
    border-radius: 50%;
    background: #3b3b3b;
    margin-left: 34px;
    display: flex;
    align-items: center;
    justify-content: center;
}

.tab-list + .win-btn {
    margin-left: 0;
}

.win-btn svg {
    width: 18px;
    height: 18px;
}

/* toolbar */
.toolbar {
    height: 68px;
    flex-shrink: 0;
    background: #2d2d2d;
    display: flex;
    align-items: center;
    padding-left: 29px;
    padding-top: 8px;
    padding-right: 40px;
}

.nav-icon {
    width: 28px;
    height: 28px;
    margin-right: 37px;
}

.omnibox {
    flex: 1;
    height: 60px;
    margin-left: -7px;
    border-radius: 30px;
    background: #232323;
    display: flex;
    align-items: center;
    padding-left: 28px;
    padding-right: 20px;
}

.lock {
    width: 16px;
    height: 22px;
}

.url {
    margin-left: 23px;
    font-size: 28px;
    letter-spacing: -0.2px;
    color: #9a9a9a;
    flex: 1;
}

.url b {
    color: #f2f2f2;
    font-weight: 400;
}

.omni-icon {
    width: 28px;
    height: 30px;
    margin-right: 33px;
}

.omni-icon--star {
    margin-right: 0;
}

.extensions {
    width: 565px;
    height: 55px;
    margin-left: 18px;
    flex-shrink: 0;
    border: 2px solid #474747;
    border-radius: 28px;
    display: flex;
    align-items: center;
    justify-content: space-between;
    padding: 0 10px 0 11px;
}

.ext {
    width: 32px;
    height: 32px;
}

.side-panel {
    width: 28px;
    height: 28px;
    margin-left: 24px;
    background: #111;
    border: solid #fff;
    border-width: 4px 4px 4px 7px;
    flex-shrink: 0;
}

.avatar {
    width: 43px;
    height: 43px;
    margin-left: 29px;
    border-radius: 50%;
    background: #33691e;
    color: #e8f0e0;
    font-size: 24px;
    line-height: 43px;
    text-align: center;
    flex-shrink: 0;
}

.kebab {
    width: 8px;
    height: 32px;
    margin-left: 39px;
}

/* bookmarks */
.bookmarks {
    height: 76px;
    flex-shrink: 0;
    background: #2d2d2d;
    border-bottom: 4px solid #151515;
    display: flex;
    align-items: center;
    padding-left: 28px;
    font-size: 29px;
}

.bm {
    display: flex;
    align-items: center;
    gap: 16px;
    white-space: nowrap;
    flex-shrink: 0;
}

/* chrome sizes bookmark buttons by their title, these are the widths on screen */
.bm:nth-child(1) { width: 299px; }
.bm:nth-child(2) { width: 292px; }
.bm:nth-child(3) { width: 305px; }
.bm:nth-child(4) { width: 286px; }
.bm:nth-child(5) { width: 309px; }
.bm:nth-child(6) { width: 287px; }
.bm:nth-child(7) { width: 308px; }
.bm:nth-child(8) { width: 309px; }
.bm:nth-child(9) { width: 301px; }
.bm:nth-child(10) { width: 306px; }
.bm:nth-child(11) { width: 307px; }
.bm:nth-child(12) { width: 250px; }

.bm-rtl {
    font-family: "DejaVu Sans", sans-serif;
    font-size: 30px;
    width: 204px;
    text-align: center;
}

.bm-more {
    margin-left: auto;
    margin-right: 36px;
    font-size: 30px;
}

/* page */
.content {
    flex: 1;
    min-height: 0;
    background: #fff;
    display: flex;
    overflow: hidden;
    font-family: "Lato", sans-serif;
    font-size: 37.5px;
    line-height: 56px;
    color: #494c4e;
}

.handle {
    width: 23px;
    height: 196px;
    margin-left: 675px;
    margin-top: 88px;
    flex-shrink: 0;
    background: #f9fafb;
    border: 2px solid #d3d9e3;
    border-left: none;
    border-radius: 0 12px 12px 0;
    display: flex;
    align-items: center;
}

.handle-arrow {
    width: 0;
    height: 0;
    margin-left: 5px;
    border-left: 9px solid #202122;
    border-top: 10px solid transparent;
    border-bottom: 10px solid transparent;
}

.article {
    width: 1420px;
    margin-left: 537px;
    margin-top: -42px;
    flex-shrink: 0;
}

.article p {
    margin: 0 0 20px;
}

.article em {
    font-size: 38.5px;
    letter-spacing: 0.5px;
}

.article .clipped {
    margin-bottom: 61px;
}

.article .blank {
    margin-bottom: 0;
    line-height: 54px;
}

h2 {
    margin: 0 0 60px;
    font-size: 60.5px;
    line-height: 72px;
    font-weight: 400;
    color: #00786f;
}

ul, ol {
    margin: 0 0 20px;
    padding: 0 0 0 40px;
}

ul {
    list-style: circle;
}

li {
    margin-bottom: 20px;
}

li:last-child {
    margin-bottom: 0;
}

li.spaced {
    margin-top: 40px;
}

a {
    color: #006fbf;
    text-decoration: none;
}

.ext-link {
    display: inline-block;
    width: 36px;
    height: 40px;
    vertical-align: -3px;
}

.scrollbar {
    width: 30px;
    margin-left: auto;
    flex-shrink: 0;
    background: #f1f1f1;
    display: flex;
    flex-direction: column;
    align-items: center;
}

.scroll-up, .scroll-down {
    width: 0;
    height: 0;
    border-left: 7px solid transparent;
    border-right: 7px solid transparent;
}

.scroll-up {
    margin-top: 8px;
    border-bottom: 8px solid #505050;
}

.scroll-thumb {
    width: 26px;
    height: 264px;
    margin-top: 588px;
    background: #c1c1c1;
}

.scroll-down {
    margin-top: auto;
    margin-bottom: 8px;
    border-top: 8px solid #505050;
}

/* downloads */
.shelf {
    height: 122px;
    flex-shrink: 0;
    background: #2d2d2d;
    border-top: 2px solid #151515;
    display: flex;
    align-items: center;
    font-size: 31px;
}

.dl {
    width: 466px;
    height: 96px;
    display: flex;
    align-items: center;
    padding-left: 34px;
    border-right: 2px solid #151515;
    flex-shrink: 0;
}

.dl:first-child {
    width: 474px;
    padding-left: 42px;
}

.dl-icon {
    width: 30px;
    height: 36px;
}

.dl-name {
    margin-left: 26px;
    width: 319px;
}

.dl-caret {
    width: 18px;
    height: 14px;
}

.show-all {
    margin-left: auto;
    width: 178px;
    height: 68px;
    border: 2px solid #1d1d1d;
    border-radius: 10px;
    color: #669df6;
    font-size: 30px;
    line-height: 62px;
    text-align: center;
}

.shelf-close {
    width: 20px;
    height: 20px;
    margin-left: 27px;
    margin-right: 26px;
}

/* desktop */
.desktop {
    height: 150px;
    flex-shrink: 0;
    background:
        linear-gradient(100deg, #3c0a2c 0, #3c0a2c 50px, transparent 51px),
        linear-gradient(90deg, #5c1a40 0, #7c2456 800px, #a33870 1300px, #8d2c5a 1700px, #a83a58 2400px, #bf4448 2900px, #c44a38 3300px, #b83a2a 3600px, #9c2c1a 3840px);
    padding-top: 2px;
}

.dock {
    width: 3228px;
    height: 140px;
    margin-left: 307px;
    padding-left: 11px;
    border: 3px solid #4a474a;
    border-radius: 44px;
    background: rgba(32, 24, 28, 0.86);
    display: flex;
    align-items: center;
}

.dock-item {
    width: 128px;
    height: 116px;
    flex-shrink: 0;
    display: flex;
    align-items: center;
    justify-content: center;
    position: relative;
    border-radius: 24px;
}

.dock-item svg {
    width: 84px;
    height: 84px;
}

.dock-item--active::before {
    content: "";
    position: absolute;
    top: 0;
    bottom: 0;
    left: 6px;
    right: 6px;
    border-radius: 24px;
    background: rgba(255, 255, 255, 0.17);
}

.dock-item--active svg {
    position: relative;
}

.dock-dots {
    position: absolute;
    bottom: 0;
    left: 0;
    right: 0;
    display: flex;
    justify-content: center;
    gap: 6px;
}

.dock-dots i {
    width: 10px;
    height: 10px;
    border-radius: 50%;
    background: #0a73e6;
}

/* text inside icons */
.fav-gd, .fav-s, .fav-dj, .fav-g, .fav-r, .ext-dots, .ext-w, .ext-g, .dock-w, .dock-pc {
    font-family: "Liberation Sans", sans-serif;
    font-weight: 700;
    text-anchor: middle;
}

.fav-gd { font-size: 18px; fill: #8a8a8a; }
.fav-s { font-size: 36px; fill: #fff; }
.fav-dj { font-size: 22px; fill: #fff; }
.fav-g { font-size: 13px; fill: #fff; font-weight: 400; }
.fav-r { font-size: 14px; fill: #ddd; font-weight: 400; }
.ext-dots { font-size: 13px; fill: #222; font-weight: 400; }
.ext-w { font-size: 26px; fill: #fff; font-family: "Liberation Serif", serif; font-style: italic; font-weight: 400; }
.ext-g { font-size: 26px; fill: #fff; font-weight: 400; }
.dock-w { font-size: 50px; fill: #e8ebf0; }
.dock-pc { font-size: 32px; fill: #f4f4f4; }
```
